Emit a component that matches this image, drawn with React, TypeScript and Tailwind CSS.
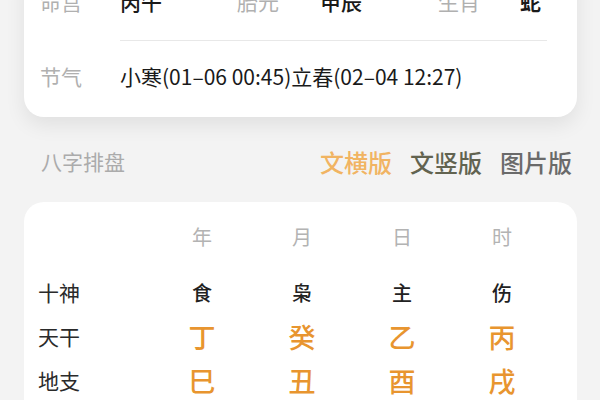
import React from "react";

const font = { fontFamily: '"Noto Sans CJK SC", "Noto Sans", sans-serif' };

export default function App() {
  const cols = ["年", "月", "日", "时"];
  const shishen = ["食", "枭", "主", "伤"];
  const tiangan = ["丁", "癸", "乙", "丙"];
  const dizhi = ["巳", "丑", "酉", "戌"];
  return (
    <div
      className="w-[600px] h-[400px] overflow-hidden bg-[#f3f3f3] flex flex-col px-[24px]"
      style={font}
    >
      {/* Card 1 */}
      <div className="mt-[-37px] w-[553px] shrink-0 bg-white rounded-[20px] shadow-[0_8px_20px_rgba(0,0,0,0.08)] pl-[16px] pr-[30px] pb-[4px] flex flex-col">
        <div className="h-[77px] flex items-center text-[21px]">
          <div className="w-[80px] shrink-0 text-[#b0b0b0]">命宫</div>
          <div className="w-[117px] shrink-0 text-[#1a1a1a] font-medium">丙午</div>
          <div className="w-[83px] shrink-0 text-[#b0b0b0]">胎元</div>
          <div className="w-[118px] shrink-0 text-[#1a1a1a] font-medium">甲辰</div>
          <div className="w-[82px] shrink-0 text-[#b0b0b0]">生肖</div>
          <div className="text-[#1a1a1a] font-bold">蛇</div>
        </div>
        <div className="h-[73px] flex text-[21px]">
          <div className="w-[80px] shrink-0 text-[#b0b0b0] flex items-center">节气</div>
          <div className="flex-1 border-t border-[#e8e8e8] flex items-center text-[#1a1a1a] whitespace-nowrap">
            小寒(01–06 00:45)立春(02–04 12:27)
          </div>
        </div>
      </div>

      {/* Section heading */}
      <div className="mt-[23px] h-[44px] shrink-0 flex items-center justify-between pl-[17px] pr-[4px]">
        <div className="text-[21px] text-[#ababab]">八字排盘</div>
        <div className="flex items-center gap-[18px] text-[24px] font-medium">
          <span className="text-[#f1b462]">文横版</span>
          <span className="text-[#626350]">文竖版</span>
          <span className="text-[#6a6a6a]">图片版</span>
        </div>
      </div>

      {/* Card 2 */}
      <div className="mt-[18px] w-[553px] shrink-0 bg-white rounded-[20px] pt-[13px] pb-[20px] flex flex-col">
        <div className="h-[44px] grid grid-cols-[128px_100px_100px_100px_100px] items-center text-[20px] text-[#b3b3b3]">
          <div></div>
          {cols.map((c) => (
            <div key={c} className="text-center">{c}</div>
          ))}
        </div>
        <div className="mt-[12px] h-[44px] grid grid-cols-[128px_100px_100px_100px_100px] items-center text-[20px] text-[#222] font-medium">
          <div className="pl-[14px] text-[21px] text-[#2a2a2a] font-normal">十神</div>
          {shishen.map((c, i) => (
            <div key={i} className="text-center">{c}</div>
          ))}
        </div>
        <div className="h-[44px] grid grid-cols-[128px_100px_100px_100px_100px] items-center">
          <div className="pl-[14px] text-[21px] text-[#2a2a2a]">天干</div>
          {tiangan.map((c, i) => (
            <div key={i} className="text-center text-[27px] text-[#e8952f] font-medium">{c}</div>
          ))}
        </div>
        <div className="h-[44px] grid grid-cols-[128px_100px_100px_100px_100px] items-center">
          <div className="pl-[14px] text-[21px] text-[#2a2a2a]">地支</div>
          {dizhi.map((c, i) => (
            <div key={i} className="text-center text-[27px] text-[#e8952f] font-medium">{c}</div>
          ))}
        </div>
      </div>
    </div>
  );
}
